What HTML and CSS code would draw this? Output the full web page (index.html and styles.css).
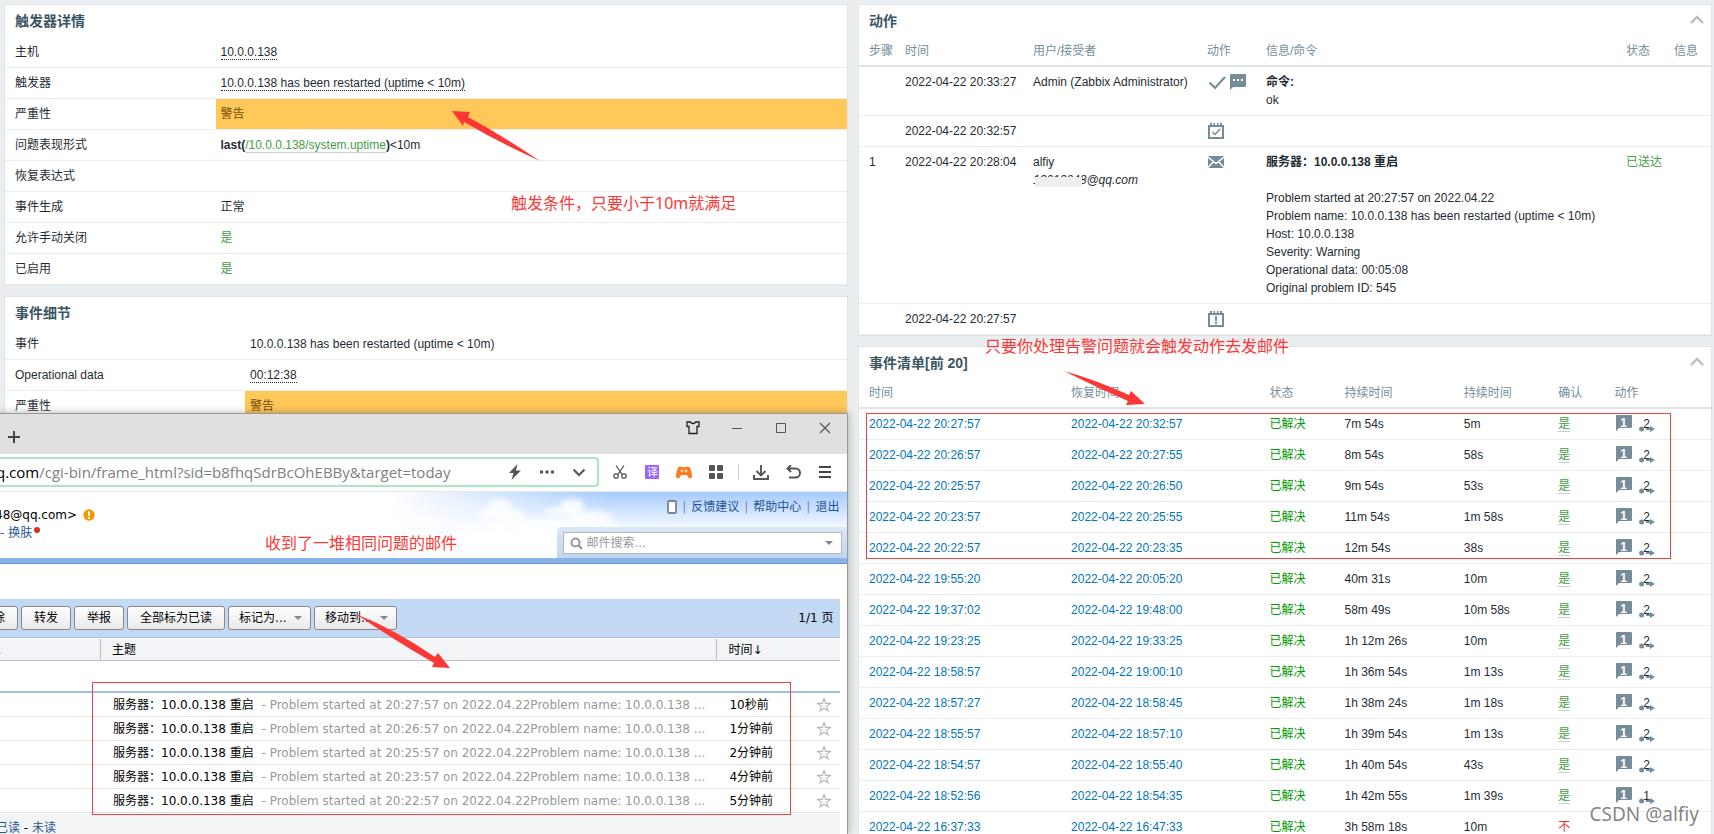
FILE: index.html
```html
<!DOCTYPE html>
<html lang="zh-CN">
<head>
<meta charset="utf-8">
<title>事件细节</title>
<link rel="stylesheet" href="styles.css">
</head>
<body>
<svg class="defs" aria-hidden="true">
  <symbol id="chev-up" viewBox="0 0 14 9"><path d="M1 8 7 2l6 6" fill="none" stroke="#b5c0c7" stroke-width="2.4"/></symbol>
  <symbol id="msg" viewBox="0 0 16 16"><path d="M1 0h14a1 1 0 0 1 1 1v11a1 1 0 0 1-1 1H3l-3 3V1a1 1 0 0 1 1-1z" fill="#768d99"/></symbol>
  <symbol id="flow" viewBox="0 0 16 6"><circle cx="2.6" cy="3" r="2.5" fill="#768d99"/><path d="M7 2h4V0l5 3-5 3V4H7z" fill="#768d99"/></symbol>
  <symbol id="star" viewBox="0 0 16 16"><path d="M8 1.8 9.7 6.400h4.600L10.600 9.200 12 14 8 11.200 4 14l1.400-4.800L1.700 6.400h4.600z" fill="none" stroke="#b5b5b5" stroke-width="1.100"/></symbol>
</svg>

<main class="dashboard">
  <div class="column">
    <section class="card">
      <h2>触发器详情</h2>
      <table class="props">
        <colgroup><col class="key-a"><col></colgroup>
        <tbody>
          <tr><th scope="row">主机</th><td><a class="hint" href="#">10.0.0.138</a></td></tr>
          <tr><th scope="row">触发器</th><td><a class="hint" href="#">10.0.0.138 has been restarted (uptime &lt; 10m)</a></td></tr>
          <tr><th scope="row">严重性</th><td class="warning">警告</td></tr>
          <tr><th scope="row">问题表现形式</th><td><b>last(</b><a class="item" href="#">/10.0.0.138/system.uptime</a><b>)</b>&lt;10m</td></tr>
          <tr><th scope="row">恢复表达式</th><td></td></tr>
          <tr><th scope="row">事件生成</th><td>正常</td></tr>
          <tr><th scope="row">允许手动关闭</th><td class="green">是</td></tr>
          <tr><th scope="row">已启用</th><td class="green">是</td></tr>
        </tbody>
      </table>
    </section>
    <section class="card">
      <h2>事件细节</h2>
      <table class="props">
        <colgroup><col class="key-b"><col></colgroup>
        <tbody>
          <tr><th scope="row">事件</th><td>10.0.0.138 has been restarted (uptime &lt; 10m)</td></tr>
          <tr><th scope="row">Operational data</th><td><a class="hint" href="#">00:12:38</a></td></tr>
          <tr><th scope="row">严重性</th><td class="warning">警告</td></tr>
        </tbody>
      </table>
    </section>
  </div>

  <div class="column">
    <section class="card">
      <header class="card-head"><h2>动作</h2><button class="fold" type="button" aria-label="收起动作"><svg width="14" height="9"><use href="#chev-up"/></svg></button></header>
      <table class="grid">
        <colgroup><col class="w-step"><col class="w-time"><col class="w-user"><col class="w-act"><col><col class="w-state"><col class="w-info"></colgroup>
        <thead><tr><th>步骤</th><th>时间</th><th>用户/接受者</th><th>动作</th><th>信息/命令</th><th>状态</th><th>信息</th></tr></thead>
        <tbody>
          <tr><td></td><td>2022-04-22 20:33:27</td><td>Admin (Zabbix Administrator)</td>
            <td><div class="icons">
              <svg width="18" height="16" viewBox="0 0 18 16"><path d="M1.500 8.500 7 14 17 3" fill="none" stroke="#768d99" stroke-width="2.200"/></svg>
              <svg width="16" height="16"><use href="#msg"/><path d="M3 5h2v2H3zM7 5h2v2H7zM11 5h2v2h-2z" fill="#fff"/></svg></div></td>
            <td><b>命令:</b><br>ok</td><td></td><td></td></tr>
          <tr><td></td><td>2022-04-22 20:32:57</td><td></td>
            <td><div class="icons"><svg class="cal" width="16" height="16" viewBox="0 0 16 16"><path d="M1 3h14v12H1z" fill="none" stroke="#768d99" stroke-width="2"/><path d="M2 0h2v3H2zM5.500 0h1.500v3H5.500zM9 0h1.500v3H9zM12 0h2v3h-2z" fill="#768d99"/><path d="m4.500 9 2.500 2.500 5-5.500" fill="none" stroke="#768d99" stroke-width="1.500"/></svg></div></td>
            <td></td><td></td><td></td></tr>
          <tr><td>1</td><td>2022-04-22 20:28:04</td><td>alfiy<br><span class="mail-id"><i>13613648@qq.com</i><span class="mask"></span></span></td>
            <td><div class="icons"><svg class="cal" width="16" height="12" viewBox="0 0 16 12"><path d="M0 0h16v12H0z" fill="#768d99"/><path d="m0 1 8 6.500L16 1M0 11.500l5.500-6M16 11.500l-5.500-6" fill="none" stroke="#fff" stroke-width="1.500"/></svg></div></td>
            <td><b>服务器：10.0.0.138 重启</b><br><br>Problem started at 20:27:57 on 2022.04.22<br>Problem name: 10.0.0.138 has been restarted (uptime &lt; 10m)<br>Host: 10.0.0.138<br>Severity: Warning<br>Operational data: 00:05:08<br>Original problem ID: 545</td>
            <td class="green sent">已送达</td><td></td></tr>
          <tr><td></td><td>2022-04-22 20:27:57</td><td></td>
            <td><div class="icons"><svg class="cal" width="16" height="16" viewBox="0 0 16 16"><path d="M1 3h14v12H1z" fill="none" stroke="#768d99" stroke-width="2"/><path d="M2 0h2v3H2zM5.500 0h1.500v3H5.500zM9 0h1.500v3H9zM12 0h2v3h-2zM7 5h2v5H7zM7 11h2v2H7z" fill="#768d99"/></svg></div></td>
            <td></td><td></td><td></td></tr>
        </tbody>
      </table>
    </section>

    <section class="card">
      <header class="card-head"><h2>事件清单[前 20]</h2><button class="fold" type="button" aria-label="收起事件清单"><svg width="14" height="9"><use href="#chev-up"/></svg></button></header>
      <table class="grid events">
        <colgroup><col class="e-time"><col class="e-rec"><col class="e-state"><col class="e-dur"><col class="e-dur2"><col class="e-ack"><col></colgroup>
        <thead><tr><th>时间</th><th>恢复时间</th><th>状态</th><th>持续时间</th><th>持续时间</th><th>确认</th><th>动作</th></tr></thead>
        <tbody id="events"></tbody>
      </table>
    </section>
  </div>
</main>

<section class="browser" aria-label="QQ邮箱">
  <div class="titlebar">
    <button class="newtab" type="button" aria-label="新标签页"><svg width="12" height="12"><path d="M6 0v12M0 6h12" stroke="#444" stroke-width="2"/></svg></button>
    <div class="winctl">
      <button type="button" aria-label="皮肤"><svg width="14" height="14" viewBox="0 0 14 14"><path d="M1 1h3.500q.5 1.500 2.500 1.500T9.500 1H13v4.500h-2V12.500H3V5.500H1z" fill="none" stroke="#222" stroke-width="1.300"/></svg></button>
      <button type="button" aria-label="最小化"><svg width="12" height="12"><path d="M1 6.500h10" stroke="#555"/></svg></button>
      <button type="button" aria-label="最大化"><svg width="12" height="12"><path d="M1.500 1.500h9v9h-9z" fill="none" stroke="#555"/></svg></button>
      <button type="button" aria-label="关闭"><svg width="12" height="12"><path d="m1 1 10 10M11 1 1 11" stroke="#555" stroke-width="1.200"/></svg></button>
    </div>
  </div>
  <div class="navbar">
    <div class="url">
      <label for="url">q.com</label><input id="url" type="text" value="/cgi-bin/frame_html?sid=b8fhqSdrBcOhEBBy&amp;target=today">
      <button type="button" aria-label="加速"><svg width="14" height="16" viewBox="0 0 14 16"><path d="M9.500 0 1 9h4.500L3.500 16 13 6.500H8z" fill="#555"/></svg></button>
      <button type="button" aria-label="更多"><svg width="14" height="4"><path d="M0 .5h3v3H0zM5.500 .5h3v3h-3zM11 .5h3v3h-3z" fill="#555"/></svg></button>
      <button type="button" aria-label="展开"><svg width="14" height="9"><path d="m1.500 1.500 5.500 5.500 5.500-5.500" fill="none" stroke="#555" stroke-width="2"/></svg></button>
    </div>
    <div class="tools">
      <button type="button" aria-label="截图"><svg width="14" height="14" viewBox="0 0 14 14" fill="none" stroke="#555" stroke-width="1.300"><path d="M3 .5 9.500 10M11 .5 4.500 10"/><circle cx="3" cy="11" r="2.200"/><circle cx="11" cy="11" r="2.200"/></svg></button>
      <button class="translate" type="button">译</button>
      <button type="button" aria-label="游戏"><svg width="16" height="13" viewBox="0 0 16 13"><path d="M4 .5Q8 2 12 .5q3 0 4 8.500.2 3.500-2 3.500-1.500 0-3.200-3.500H5.200Q3.500 12.500 2 12.500-.2 12.500 0 9 1 .5 4 .5z" fill="#ff7a1f"/><path d="M4.500 5h3M6 3.500v3M10 3.500v3M8.700 5h2.600" stroke="#fff"/></svg></button>
      <button type="button" aria-label="应用"><svg width="15" height="15" fill="#555"><rect width="6" height="6" rx="1"/><rect x="8" width="6" height="6" rx="1"/><rect y="8" width="6" height="6" rx="1"/><rect x="8" y="8" width="6" height="6" rx="1"/></svg></button>
      <span class="sep"></span>
      <button type="button" aria-label="下载"><svg width="16" height="15" viewBox="0 0 16 15" fill="none" stroke="#555" stroke-width="1.900"><path d="M8 0v10M3.500 6 8 10.500 12.500 6M1 10v4h14v-4"/></svg></button>
      <button type="button" aria-label="撤销"><svg width="15" height="14" viewBox="0 0 15 14" fill="none" stroke="#555" stroke-width="2"><path d="M2 3.500h7.500a4.500 4.500 0 0 1 0 9H3M5 0 1.500 3.500 5 7"/></svg></button>
      <button type="button" aria-label="菜单"><svg width="12" height="12"><path d="M0 1h12M0 6h12M0 11h12" stroke="#444" stroke-width="2"/></svg></button>
    </div>
  </div>
  <div class="mailtop">
    <svg class="clouds" width="160" height="40" viewBox="0 0 160 40" aria-hidden="true">
      <defs><filter id="soft" x="-20%" y="-40%" width="140%" height="180%"><feGaussianBlur stdDeviation="2.400"/></filter></defs>
      <g fill="#fff" filter="url(#soft)" opacity=".85"><ellipse cx="30" cy="15" rx="12" ry="8"/><ellipse cx="20" cy="22" rx="14" ry="5"/><ellipse cx="42" cy="25" rx="14" ry="7"/><ellipse cx="102" cy="14" rx="12" ry="7"/><ellipse cx="88" cy="20" rx="14" ry="4"/><ellipse cx="120" cy="24" rx="24" ry="5"/><ellipse cx="80" cy="33" rx="70" ry="6"/></g>
    </svg>
    <div class="account">
      <p class="addr">48@qq.com&gt; <svg width="12" height="12" viewBox="0 0 12 12"><circle cx="6" cy="6" r="5.700" fill="#f39800"/><path d="M5 2.500h2v4.500H5zM5 8h2v1.700H5z" fill="#fff"/></svg></p>
      <p class="skin">- <a href="#">换肤</a><span class="dot"></span></p>
    </div>
    <div class="mailside">
      <nav class="links">
        <svg width="10" height="14"><rect x="1" y="1" width="8" height="12" rx="1" fill="#fff" stroke="#7b8590" stroke-width="1.800"/></svg>
        <span>|</span><a href="#">反馈建议</a><span>|</span><a href="#">帮助中心</a><span>|</span><a href="#">退出</a>
      </nav>
      <div class="searchwrap">
        <label class="search"><svg width="13" height="13" viewBox="0 0 13 13"><circle cx="5.500" cy="5.500" r="4" fill="none" stroke="#999" stroke-width="2"/><path d="m8.500 8.500 3.500 3.500" stroke="#999" stroke-width="2.400"/></svg><input type="text" aria-label="邮件搜索" placeholder="邮件搜索..."><span class="caret"></span></label>
      </div>
    </div>
  </div>
  <div class="mailbody">
    <div class="mailtools">
      <button type="button" class="cut">删除</button><button type="button">转发</button><button type="button">举报</button><button type="button">全部标为已读</button><button type="button" class="drop">标记为...<span class="caret"></span></button><button type="button" class="drop">移动到...<span class="caret"></span></button>
      <span class="pages">1/1 页</span>
    </div>
    <table class="mails">
      <colgroup><col class="m-from"><col><col class="m-time"><col class="m-star"></colgroup>
      <thead><tr><th>人</th><th>主题</th><th>时间↓</th><th></th></tr></thead>
      <tbody id="mails"></tbody>
    </table>
    <div class="mailfoot"><a href="#">已读</a> - <a href="#">未读</a></div>
  </div>
</section>

<div class="notes">
  <p class="note note-a">触发条件，只要小于10m就满足</p>
  <p class="note note-b">只要你处理告警问题就会触发动作去发邮件</p>
  <p class="note note-c">收到了一堆相同问题的邮件</p>
  <span class="frame frame-mail"></span>
  <span class="frame frame-events"></span>
  <svg class="arrows" width="1200" height="700" fill="#fc3837" aria-hidden="true">
    <path d="m452 111 18 1-2 5Q505 137 540 161 500 143 464 122l-1 4z"/>
    <path d="m1145 404-14-13-2 4Q1096 380 1064 371 1094 386 1128 401l-2 4z"/>
    <path d="m450 668-12-15-3 4Q396 630 356 614 394 640 434 663l-2 4z"/>
  </svg>
  <span class="watermark">CSDN @alfiy</span>
</div>

<script src="app.js"></script>
</body>
</html>
```
FILE: styles.css
```css
* { box-sizing: border-box; }
html, body { height: 100%; }
body {
  margin: 0;
  padding: 4px 2px 0 4px;
  overflow: hidden;
  position: relative;
  background: #ebeef0;
  color: #1f2c33;
  font: 12px/18px "Liberation Sans", "Noto Sans CJK SC", sans-serif;
}
a { text-decoration: none; }
p { margin: 0; }
button { border: 0; background: none; padding: 0; font: inherit; color: inherit; }
svg { display: block; flex: none; }
.defs { position: absolute; width: 0; height: 0; }
table { width: 100%; border-collapse: separate; border-spacing: 0; table-layout: fixed; }
th, td { text-align: left; vertical-align: top; font-weight: 400; }

.dashboard { display: grid; grid-template-columns: minmax(0, 844fr) minmax(0, 854fr); gap: 10px; align-items: start; }
.column { display: grid; gap: 10px; }
.card { background: #fff; border: 1px solid #dfe4e7; }
.card h2 { margin: 0; padding: 5px 10px; font-size: 14px; line-height: 22px; font-weight: 700; color: #3c5563; }
.card-head { display: flex; justify-content: space-between; align-items: center; padding-right: 7px; }
.fold { display: flex; padding: 0 0 4px; }

.props th, .props td { height: 31px; padding: 6px 5px; border-bottom: 1px solid #ebeef0; }
.props th { padding-left: 10px; }
.key-a { width: 25%; }
.key-b { width: 28.5%; }
.hint { color: inherit; border-bottom: 1px dotted #1f2c33; }
.item { color: #429e47; border-bottom: 1px solid #c9d0d5; }
.props .warning { background: #ffc859; color: #734d00; }
.green { color: #429e47; }

.grid th { padding: 5px 5px; border-bottom: 2px solid #dfe4e7; color: #768d99; white-space: nowrap; }
.grid td { height: 31px; padding: 6px 5px; border-bottom: 1px solid #ebeef0; }
.grid th:first-child, .grid td:first-child { padding-left: 10px; }
.w-step { width: 41px; }
.w-time { width: 128px; }
.w-user { width: 174px; }
.w-act { width: 59px; }
.w-state { width: 48px; }
.w-info { width: 42px; }
.grid .sent { white-space: nowrap; }
.icons { display: flex; gap: 4px; align-items: center; height: 18px; padding-left: 1px; }
.mail-id { position: relative; display: inline-block; }
.mask { position: absolute; left: 2px; top: 6px; width: 47px; height: 10px; background: #efefef; }

.e-time { width: 24.3%; }
.e-rec { width: 23.3%; }
.e-state { width: 8.8%; }
.e-dur { width: 14%; }
.e-dur2 { width: 11.1%; }
.e-ack { width: 6.6%; }
.events td a { color: #0275b8; }
.events .solved { color: #009900; }
.events td .yes { color: #429e47; border-bottom: 1px solid #c9d0d5; }
.events td .no { color: #e33734; }
.badges { display: flex; gap: 7px; height: 18px; padding-left: 1px; }
.badge { position: relative; width: 16px; height: 16px; line-height: 14px; font-weight: 700; color: #fff; }
.badge svg { position: absolute; inset: 0; }
.badge span { position: relative; }
.steps { position: relative; width: 16px; height: 18px; line-height: 18px; color: #1f2c33; }
.steps svg { position: absolute; left: 0; bottom: 1px; }

.browser {
  position: absolute;
  left: 0;
  top: 413px;
  bottom: 0;
  width: 49.5%;
  display: flex;
  flex-direction: column;
  overflow: hidden;
  background: #fff;
  border-top: 1px solid #9a9a9a;
  border-right: 1px solid #999;
  box-shadow: 0 0 8px rgba(0, 0, 0, .3);
  color: #000;
}
.titlebar { display: flex; justify-content: space-between; height: 40px; flex: none; background: #e0e0e0; }
.newtab { padding: 6px 8px 0; display: flex; align-items: center; }
.winctl { display: flex; height: 28px; align-items: center; }
.winctl button { width: 44px; display: flex; justify-content: center; }
.navbar { display: flex; align-items: center; height: 38px; flex: none; border-bottom: 1px solid #e8e8e8; padding-bottom: 1px; }
.url { flex: 1; min-width: 0; display: flex; align-items: center; height: 30px; border: 2px solid #aae6c5; border-left: 0; border-radius: 0 4px 4px 0; font: 15px/24px "Open Sans", "Noto Sans CJK SC", sans-serif; overflow: hidden; padding-right: 2px; }
.url label { margin-left: -4px; }
.url input { flex: 1; min-width: 0; border: 0; padding: 0; background: none; font: inherit; color: #808080; outline: 0; }
.url button { width: 32px; display: flex; justify-content: center; }
.tools { display: flex; align-items: center; padding: 0 6px 0 5px; }
.tools button { width: 32px; display: flex; justify-content: center; }
.tools .translate { width: 14px; height: 14px; margin: 0 9px; border-radius: 1px; background: #9a66ff; color: #fff; font-size: 11px; line-height: 14px; }
.sep { width: 1px; height: 16px; margin: 0 6px; background: #d0d0d0; }

.mailtop {
  position: relative;
  display: flex;
  justify-content: space-between;
  height: 72px;
  flex: none;
  border-bottom: 1px solid #6193cf;
  box-shadow: inset 0 -5px #88b2e8;
  padding-bottom: 5px;
  background: linear-gradient(to right, #fff 46%, rgba(255, 255, 255, 0) 72%), linear-gradient(#a5cbff, #fff 40px);
  font: 12px/18px "DejaVu Sans", "Noto Sans CJK SC", sans-serif;
}
.clouds { position: absolute; left: 470px; top: 0; }
.account { position: relative; padding-top: 14px; }
.addr { display: flex; gap: 6px; align-items: center; margin-left: -5px; }
.skin { display: flex; gap: 4px; color: #555; }
.skin a, .links a, .mailfoot a { color: #1e5494; }
.dot { width: 6px; height: 6px; margin: 3px 0 0 -2px; border-radius: 50%; background: #d9301a; }
.mailside { position: relative; display: flex; flex-direction: column; justify-content: space-between; align-items: flex-end; }
.links { display: flex; align-items: center; gap: 5px; padding: 6px 8px 0 0; color: #6c8bb5; }
.links a { color: #1e5494; }
.searchwrap { padding: 5px 5px 4px 6px; border-radius: 4px 0 0 0; background: linear-gradient(#dbe8f8, #bfd6f2); }
.search { display: flex; align-items: center; gap: 3px; width: 279px; height: 22px; padding: 0 8px 0 6px; background: #fff; border: 1px solid #b5b5b5; }
.search input { flex: 1; min-width: 0; border: 0; padding: 0; outline: 0; background: none; font: inherit; }
.search input::placeholder { color: #999; opacity: 1; }
.caret { width: 0; border: 4px solid transparent; border-top-color: #888; border-bottom: 0; }

.mailbody { flex: 1; display: flex; flex-direction: column; padding: 35px 7px 0 0; font: 12px/18px "DejaVu Sans", "Noto Sans CJK SC", sans-serif; }
.mailtools { display: flex; gap: 3px; align-items: center; height: 39px; flex: none; background: #c2d8f3; border-bottom: 1px solid #a9bfdd; padding-right: 7px; }
.mailtools button { height: 24px; padding: 0 12px; border: 1px solid #888; border-radius: 3px; background: linear-gradient(#fff, #e9e9e9); line-height: 22px; white-space: nowrap; }
.mailtools .cut { margin-left: -32px; }
.mailtools .drop { display: flex; align-items: center; justify-content: space-between; width: 83px; padding: 0 8px 0 10px; }
.pages { margin-left: auto; }
.mails { margin-top: 1px; }
.m-from { width: 101px; }
.m-time { width: 91px; }
.m-star { width: 32px; }
.mails th { height: 22px; padding: 2px 11px 1px; background: #f2f4f6; border-bottom: 1px solid #b9bec6; }
.mails th:first-child { padding-left: 0; text-indent: -11px; color: #1e5494; overflow: hidden; }
.mails th:first-child, .mails th:nth-child(2) { border-right: 1px solid #b9bec6; }
.mails thead::after { content: ""; display: block; height: 30px; }
.mails td { height: 24px; padding: 3px 0 2px 12px; border-bottom: 1px solid #e0e2e4; white-space: nowrap; overflow: hidden; }
.mails tbody tr:first-child td { height: 26px; border-top: 2px solid #a3bfe0; }
.mails td svg { margin-top: 1px; }
.mails td:last-child { padding-left: 8px; }
.mails .excerpt { padding-left: 4px; color: #999; }
.mailfoot { flex: 1; margin: 1px 0 0; padding-top: 5px; background: #f2f4f5; text-indent: -4px; }

.notes { position: absolute; inset: 0; pointer-events: none; overflow: hidden; }
.note { position: absolute; font: 16px/24px "Noto Sans", "Noto Sans CJK SC", sans-serif; color: #fc3837; white-space: nowrap; }
.note-a { left: 511px; top: 191px; }
.note-b { left: 985px; top: 334px; }
.note-c { left: 265px; top: 531px; }
.frame { position: absolute; border: 1px solid #f04040; }
.frame-mail { left: 92px; top: 682px; width: 699px; height: 133px; }
.frame-events { left: 866px; top: 413px; width: 805px; height: 146px; }
.arrows { position: absolute; left: 0; top: 0; }
.watermark { position: absolute; right: 15px; bottom: 8px; font: 19px/24px "Noto Sans", sans-serif; color: rgba(110, 110, 110, .85); text-shadow: 0 0 2px #fff; }
```
FILE: app.js
```js
const events = [
  ["2022-04-22 20:27:57", "2022-04-22 20:32:57", "7m 54s", "5m", 2],
  ["2022-04-22 20:26:57", "2022-04-22 20:27:55", "8m 54s", "58s", 2],
  ["2022-04-22 20:25:57", "2022-04-22 20:26:50", "9m 54s", "53s", 2],
  ["2022-04-22 20:23:57", "2022-04-22 20:25:55", "11m 54s", "1m 58s", 2],
  ["2022-04-22 20:22:57", "2022-04-22 20:23:35", "12m 54s", "38s", 2],
  ["2022-04-22 19:55:20", "2022-04-22 20:05:20", "40m 31s", "10m", 2],
  ["2022-04-22 19:37:02", "2022-04-22 19:48:00", "58m 49s", "10m 58s", 2],
  ["2022-04-22 19:23:25", "2022-04-22 19:33:25", "1h 12m 26s", "10m", 2],
  ["2022-04-22 18:58:57", "2022-04-22 19:00:10", "1h 36m 54s", "1m 13s", 2],
  ["2022-04-22 18:57:27", "2022-04-22 18:58:45", "1h 38m 24s", "1m 18s", 2],
  ["2022-04-22 18:55:57", "2022-04-22 18:57:10", "1h 39m 54s", "1m 13s", 2],
  ["2022-04-22 18:54:57", "2022-04-22 18:55:40", "1h 40m 54s", "43s", 2],
  ["2022-04-22 18:52:56", "2022-04-22 18:54:35", "1h 42m 55s", "1m 39s", 1],
  ["2022-04-22 16:37:33", "2022-04-22 16:47:33", "3h 58m 18s", "10m", 0]
];
document.getElementById("events").innerHTML = events.map(([start, end, age, length, steps]) => {
  const ack = steps ? '<a class="yes" href="#">是</a>' : '<a class="no" href="#">不</a>';
  const badges = steps ? `<div class="badges"><button class="badge" type="button"><svg width="16" height="16"><use href="#msg"/></svg><span>1</span></button><button class="steps" type="button">${steps}<svg width="16" height="6"><use href="#flow"/></svg></button></div>` : "";
  return `<tr><td><a href="#">${start}</a></td><td><a href="#">${end}</a></td><td class="solved">已解决</td><td>${age}</td><td>${length}</td><td>${ack}</td><td>${badges}</td></tr>`;
}).join("");

const mails = [["20:27:57", "10秒前"], ["20:26:57", "1分钟前"], ["20:25:57", "2分钟前"], ["20:23:57", "4分钟前"], ["20:22:57", "5分钟前"]];
document.getElementById("mails").innerHTML = mails.map(([at, ago]) =>
  `<tr><td></td><td>服务器：10.0.0.138 重启<span class="excerpt"> - Problem started at ${at} on 2022.04.22Problem name: 10.0.0.138 ...</span></td><td>${ago}</td><td><svg width="16" height="16"><use href="#star"/></svg></td></tr>`
).join("");
```
